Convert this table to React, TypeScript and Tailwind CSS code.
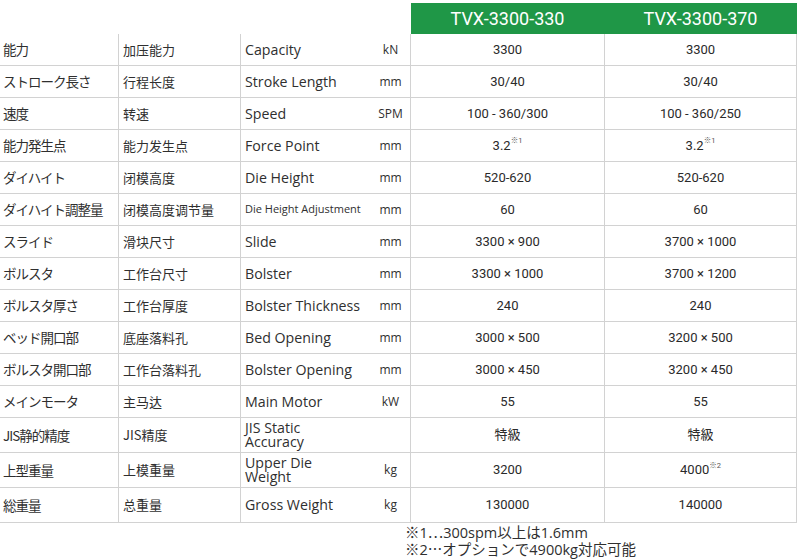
import React from 'react';

type Row = {
  ja: string;
  zh: string;
  en: string;
  unit: string;
  a: string;
  b: string;
  aNote?: string;
  bNote?: string;
  enSmall?: boolean;
  tall?: boolean;
};

const rows: Row[] = [
  { ja: '能力', zh: '加压能力', en: 'Capacity', unit: 'kN', a: '3300', b: '3300' },
  { ja: 'ストローク長さ', zh: '行程长度', en: 'Stroke Length', unit: 'mm', a: '30/40', b: '30/40' },
  { ja: '速度', zh: '转速', en: 'Speed', unit: 'SPM', a: '100 - 360/300', b: '100 - 360/250' },
  { ja: '能力発生点', zh: '能力发生点', en: 'Force Point', unit: 'mm', a: '3.2', b: '3.2', aNote: '※1', bNote: '※1' },
  { ja: 'ダイハイト', zh: '闭模高度', en: 'Die Height', unit: 'mm', a: '520-620', b: '520-620' },
  { ja: 'ダイハイト調整量', zh: '闭模高度调节量', en: 'Die Height Adjustment', unit: 'mm', a: '60', b: '60', enSmall: true },
  { ja: 'スライド', zh: '滑块尺寸', en: 'Slide', unit: 'mm', a: '3300 × 900', b: '3700 × 1000' },
  { ja: 'ボルスタ', zh: '工作台尺寸', en: 'Bolster', unit: 'mm', a: '3300 × 1000', b: '3700 × 1200' },
  { ja: 'ボルスタ厚さ', zh: '工作台厚度', en: 'Bolster Thickness', unit: 'mm', a: '240', b: '240' },
  { ja: 'ベッド開口部', zh: '底座落料孔', en: 'Bed Opening', unit: 'mm', a: '3000 × 500', b: '3200 × 500' },
  { ja: 'ボルスタ開口部', zh: '工作台落料孔', en: 'Bolster Opening', unit: 'mm', a: '3000 × 450', b: '3200 × 450' },
  { ja: 'メインモータ', zh: '主马达', en: 'Main Motor', unit: 'kW', a: '55', b: '55' },
  { ja: 'JIS静的精度', zh: 'JIS精度', en: 'JIS Static Accuracy', unit: '', a: '特級', b: '特級', tall: true },
  { ja: '上型重量', zh: '上模重量', en: 'Upper Die Weight', unit: 'kg', a: '3200', b: '4000', bNote: '※2', tall: true },
  { ja: '総重量', zh: '总重量', en: 'Gross Weight', unit: 'kg', a: '130000', b: '140000', tall: true },
];

const jaFont = "font-['Noto_Sans_CJK_JP',sans-serif]";
const enFont = "font-['Open_Sans','Noto_Sans_CJK_JP',sans-serif]";
const numFont = "font-['Roboto','Noto_Sans_CJK_JP',sans-serif]";

function Value({ v, note }: { v: string; note?: string }) {
  return (
    <div className={`flex items-center justify-center border-b border-r border-[#d2d2d2] text-[13px] text-[#2a2a2a] ${numFont}`}>
      <span>
        {v}
        {note && <sup className="text-[7.5px] text-[#555] align-[3px]">{note}</sup>}
      </span>
    </div>
  );
}

export default function App() {
  return (
    <div className="w-[800px] h-[560px] bg-white text-[#2f2f2f] overflow-hidden">
      <div className="pt-[3px] grid grid-cols-[119px_122px_130px_40px_194px_192px]">
        {/* header */}
        <div className="col-span-4" />
        <div className={`col-span-2 h-[31px] bg-[#1f9747] grid grid-cols-2 text-white text-[18px] ${numFont}`}>
          <div className="flex items-center justify-center">TVX-3300-330</div>
          <div className="flex items-center justify-center">TVX-3300-370</div>
        </div>

        {rows.map((r) => (
          <React.Fragment key={r.ja}>
            <div
              className={`${r.tall ? 'h-[35px]' : 'h-[32px]'} flex items-center pl-[3px] border-b border-r border-[#d2d2d2] text-[13.5px] tracking-[-1px] ${jaFont}`}
            >
              {r.ja}
            </div>
            <div className={`flex items-center pl-1 border-b border-r border-[#d2d2d2] text-[13px] ${jaFont}`}>
              {r.zh}
            </div>
            <div
              className={`flex items-center pl-1 border-b border-[#d2d2d2] ${enFont} ${
                r.enSmall ? 'text-[11px]' : 'text-[14.2px]'
              } ${r.tall && r.en.length > 14 ? 'leading-[14px] pr-6' : ''}`}
            >
              {r.en}
            </div>
            <div className={`flex items-center justify-center border-b border-r border-[#d2d2d2] text-[12px] ${enFont}`}>
              {r.unit}
            </div>
            <Value v={r.a} note={r.aNote} />
            <Value v={r.b} note={r.bNote} />
          </React.Fragment>
        ))}
      </div>

      {/* footnotes */}
      <div className={`pl-[405px] pt-[1px] text-[14.5px] leading-[16px] text-[#2f2f2f] ${enFont}`}>
        <div>
          ※1<span className={jaFont}>…</span>300spm以上は1.6mm
        </div>
        <div>
          ※2<span className={jaFont}>…</span>オプションで4900kg対応可能
        </div>
      </div>
    </div>
  );
}
